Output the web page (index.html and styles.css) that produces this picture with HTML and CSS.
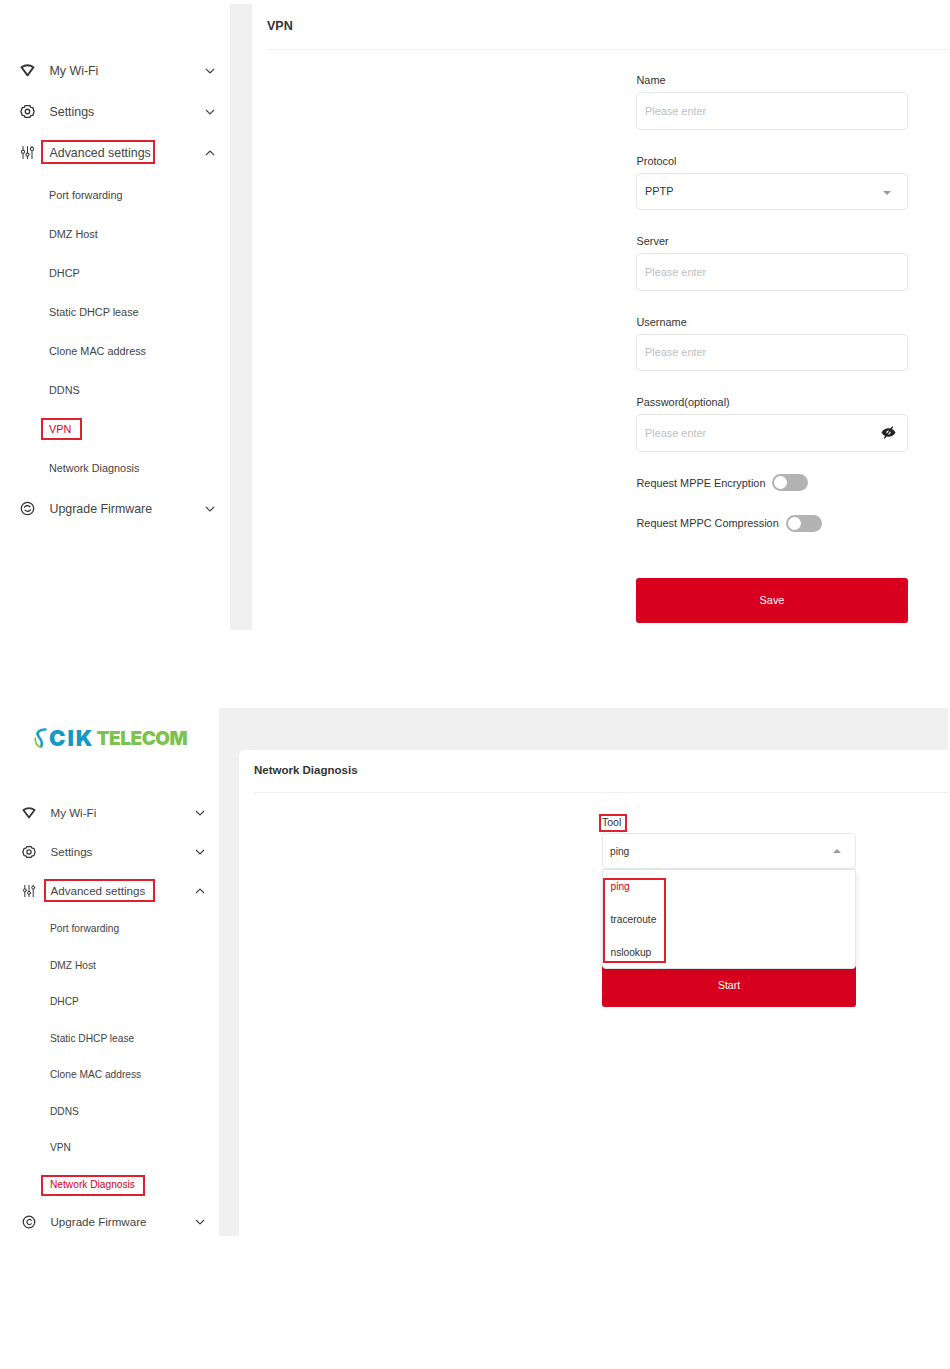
FILE: index.html
```html
<!DOCTYPE html>
<html>

<head>
  <meta http-equiv="Content-Type" content="text/html;charset=utf-8" />
  <title>Router manual</title>
  <link rel="stylesheet" href="styles.css">
</head>

<body>

  <!-- VPN page -->
  <div class="panel panelVpn">
    <div class="sidebar">
      <ul class="menu">
        <li class="menuItem">
          <svg class="menuIcon wifiIcon" viewBox="0 0 16 16"><path d="M1.6 4.6C5.4 2 10.6 2 14.4 4.6L8 13.2Z" /></svg>
          <span>My Wi-Fi</span>
          <svg class="chevron" viewBox="0 0 10 6"><path d="M1 1L5 5L9 1" /></svg>
        </li>
        <li class="menuItem">
          <svg class="menuIcon" viewBox="0 0 16 16"><path d="M5.5 1.8H10.5L11.5 3.6L13.6 3.8L15 8L13.6 12.2L11.5 12.4L10.5 14.2H5.5L4.5 12.4L2.4 12.2L1 8L2.4 3.8L4.5 3.6Z" /><circle cx="8" cy="8" r="2.4" /></svg>
          <span>Settings</span>
          <svg class="chevron" viewBox="0 0 10 6"><path d="M1 1L5 5L9 1" /></svg>
        </li>
        <li class="menuItem menuOpen">
          <svg class="menuIcon slidersIcon" viewBox="0 0 16 16"><path d="M3.2 1.5V5.5M3.2 9V14.5M8 1.5V8.5M8 12V14.5M12.8 1.5V2.5M12.8 6V14.5" /><circle cx="3.2" cy="7.2" r="1.7" /><circle cx="8" cy="10.2" r="1.7" /><circle cx="12.8" cy="4.2" r="1.7" /></svg>
          <span class="mark">Advanced settings</span>
          <svg class="chevron" viewBox="0 0 10 6"><path d="M1 5L5 1L9 5" /></svg>
        </li>
        <li class="subItem"><span>Port forwarding</span></li>
        <li class="subItem"><span>DMZ Host</span></li>
        <li class="subItem"><span>DHCP</span></li>
        <li class="subItem"><span>Static DHCP lease</span></li>
        <li class="subItem"><span>Clone MAC address</span></li>
        <li class="subItem"><span>DDNS</span></li>
        <li class="subItem active"><span class="mark">VPN</span></li>
        <li class="subItem"><span>Network Diagnosis</span></li>
        <li class="menuItem menuLast">
          <svg class="menuIcon" viewBox="0 0 16 16"><circle cx="8" cy="8" r="6.6" /><path d="M4.8 6.6C5.6 4.8 9 4.4 10.6 6.2M11.2 9.4C10.4 11.2 7 11.6 5.4 9.8" /></svg>
          <span>Upgrade Firmware</span>
          <svg class="chevron" viewBox="0 0 10 6"><path d="M1 1L5 5L9 1" /></svg>
        </li>
      </ul>
    </div>

    <div class="content">
      <div class="contentTitle">VPN</div>
      <div class="formWrap">
        <div class="field">
          <label>Name</label>
          <div class="input placeholder">Please enter</div>
        </div>
        <div class="field">
          <label>Protocol</label>
          <div class="input">PPTP <span class="caretDown"></span></div>
        </div>
        <div class="field">
          <label>Server</label>
          <div class="input placeholder">Please enter</div>
        </div>
        <div class="field">
          <label>Username</label>
          <div class="input placeholder">Please enter</div>
        </div>
        <div class="field fieldLast">
          <label>Password(optional)</label>
          <div class="input placeholder">Please enter
            <svg class="eye" viewBox="0 0 16 16"><path d="M.5 8C2.5 4.8 5 3.4 8 3.4S13.5 4.8 15.5 8C13.5 11.2 11 12.6 8 12.6S2.5 11.2 .5 8Z" /><circle class="eyeHole" cx="8" cy="8" r="2.2" /><path class="eyeSlash" d="M12.5 1.8L3.5 14.2" /></svg>
          </div>
        </div>
        <div class="switchRow">Request MPPE Encryption <span class="switch"></span></div>
        <div class="switchRow">Request MPPC Compression <span class="switch"></span></div>
        <div class="button">Save</div>
      </div>
    </div>
  </div>

  <!-- Network diagnosis page -->
  <div class="panel panelDiag">
    <div class="sidebar">
      <div class="logo">
        <svg class="logoMark" viewBox="0 0 14 20"><path class="swooshBlue" d="M11.5 1.5C5 1 1.5 5 5 9C7.5 12 9 15 7 18.5" /><path class="swooshGreen" d="M1.2 10.5C1.5 15.5 4 18.8 7 19.3" /></svg>
        <span class="logoCik">CIK</span><span class="logoTelecom">TELECOM</span>
      </div>
      <ul class="menu">
        <li class="menuItem">
          <svg class="menuIcon wifiIcon" viewBox="0 0 16 16"><path d="M1.6 4.6C5.4 2 10.6 2 14.4 4.6L8 13.2Z" /></svg>
          <span>My Wi-Fi</span>
          <svg class="chevron" viewBox="0 0 10 6"><path d="M1 1L5 5L9 1" /></svg>
        </li>
        <li class="menuItem">
          <svg class="menuIcon" viewBox="0 0 16 16"><path d="M5.5 1.8H10.5L11.5 3.6L13.6 3.8L15 8L13.6 12.2L11.5 12.4L10.5 14.2H5.5L4.5 12.4L2.4 12.2L1 8L2.4 3.8L4.5 3.6Z" /><circle cx="8" cy="8" r="2.4" /></svg>
          <span>Settings</span>
          <svg class="chevron" viewBox="0 0 10 6"><path d="M1 1L5 5L9 1" /></svg>
        </li>
        <li class="menuItem">
          <svg class="menuIcon slidersIcon" viewBox="0 0 16 16"><path d="M3.2 1.5V5.5M3.2 9V14.5M8 1.5V8.5M8 12V14.5M12.8 1.5V2.5M12.8 6V14.5" /><circle cx="3.2" cy="7.2" r="1.7" /><circle cx="8" cy="10.2" r="1.7" /><circle cx="12.8" cy="4.2" r="1.7" /></svg>
          <span class="mark">Advanced settings</span>
          <svg class="chevron" viewBox="0 0 10 6"><path d="M1 5L5 1L9 5" /></svg>
        </li>
        <li class="subItem"><span>Port forwarding</span></li>
        <li class="subItem"><span>DMZ Host</span></li>
        <li class="subItem"><span>DHCP</span></li>
        <li class="subItem"><span>Static DHCP lease</span></li>
        <li class="subItem"><span>Clone MAC address</span></li>
        <li class="subItem"><span>DDNS</span></li>
        <li class="subItem"><span>VPN</span></li>
        <li class="subItem active"><span class="mark">Network Diagnosis</span></li>
        <li class="menuItem">
          <svg class="menuIcon" viewBox="0 0 16 16"><circle cx="8" cy="8" r="6.6" /><path d="M10.6 6C9.4 4.4 6 4.6 5.6 8C6 11.4 9.4 11.6 10.6 10" /></svg>
          <span>Upgrade Firmware</span>
          <svg class="chevron" viewBox="0 0 10 6"><path d="M1 1L5 5L9 1" /></svg>
        </li>
      </ul>
    </div>

    <div class="contentArea">
      <div class="content">
        <div class="contentTitle">Network Diagnosis</div>
        <div class="formWrap">
          <div class="field">
            <label><span class="mark">Tool</span></label>
            <div class="input">ping <span class="caretUp"></span></div>
            <ul class="dropdown">
              <li class="active">ping</li>
              <li>traceroute</li>
              <li>nslookup</li>
              <li class="dropdownMark"></li>
            </ul>
          </div>
          <div class="button">Start</div>
        </div>
      </div>
    </div>
  </div>

</body>

</html>
```

FILE: styles.css
```css
body {
  font-family: "Liberation Sans", Arial, sans-serif;
  color: #333;
  background-color: white;
  margin: 0 2px 0 0;
  padding-top: 4px;
}

ul,
li {
  margin: 0;
  padding: 0;
  list-style: none;
}

.panel {
  display: flex;
}

.panelVpn {
  height: 626px;
}

.panelDiag {
  height: 528px;
  margin-top: 78px;
}

.sidebar {
  flex: none;
  background: white;
}

/* menu */

.menuItem,
.subItem {
  display: flex;
  align-items: center;
  color: #444;
}

.menuIcon {
  flex: none;
  fill: none;
  stroke: #333;
  stroke-width: 1.4;
  stroke-linejoin: round;
  stroke-linecap: round;
}

.wifiIcon {
  stroke-width: 2;
}

.slidersIcon {
  stroke-width: 1.1;
}

.chevron {
  flex: none;
  width: 10px;
  height: 6px;
  margin-left: auto;
  fill: none;
  stroke: #444;
  stroke-width: 1.2;
}

.subItem.active {
  color: #d9001b;
}

/* red boxes of the manual */

.mark {
  position: relative;
}

.mark::after {
  content: "";
  position: absolute;
  border: 2px solid #e0202c;
}

/* content */

.contentTitle {
  font-weight: bold;
  color: #333;
  border-bottom: 1px solid #f0f0f0;
}

label {
  display: block;
  color: #333;
}

.input {
  position: relative;
  display: flex;
  align-items: center;
  box-sizing: border-box;
  background: white;
  border: 1px solid #e8e8e8;
  border-radius: 4px;
  color: #333;
}

.placeholder {
  color: #c0c0c0;
}

.caretDown,
.caretUp {
  position: absolute;
  width: 0;
  height: 0;
  border-left: 4.5px solid transparent;
  border-right: 4.5px solid transparent;
}

.caretDown {
  border-top: 4.5px solid #999;
}

.caretUp {
  border-bottom: 4.5px solid #999;
}

.button {
  background: #d7001e;
  color: white;
  border-radius: 3px;
  text-align: center;
}

/* first page */

.panelVpn .sidebar {
  width: 230px;
  padding-top: 46px;
  box-sizing: border-box;
}

.panelVpn .menu {
  padding: 0 15px 0 20px;
}

.panelVpn .menuItem {
  height: 41px;
  font-size: 12.4px;
}

.panelVpn .menuOpen {
  margin-bottom: 2px;
}

.panelVpn .menuLast {
  margin-top: 1px;
}

.panelVpn .menuIcon {
  width: 15px;
  height: 15px;
  margin-right: 14.5px;
}

.panelVpn .subItem {
  height: 39px;
  padding-left: 29px;
  font-size: 10.85px;
}

.panelVpn .menuItem .mark::after {
  top: -6px;
  bottom: -4px;
  left: -9px;
  right: -4px;
}

.panelVpn .subItem .mark::after {
  top: -5px;
  bottom: -5px;
  left: -8px;
  right: -11px;
}

.panelVpn .content {
  flex: 1;
  background: white;
  border-left: 22px solid #f0f0f0;
}

.panelVpn .contentTitle {
  margin-left: 14px;
  height: 45px;
  padding-left: 1px;
  line-height: 44px;
  font-size: 12.5px;
}

.panelVpn .formWrap {
  width: 272px;
  margin-left: 384px;
  padding-top: 24.4px;
}

.panelVpn .field {
  margin-bottom: 25px;
}

.panelVpn .fieldLast {
  margin-bottom: 22px;
}

.panelVpn label {
  padding-left: 0.5px;
  font-size: 10.9px;
  line-height: 13px;
  margin-bottom: 5px;
}

.panelVpn .input {
  height: 37.5px;
  padding: 0 0 1px 8px;
  font-size: 10.9px;
}

.panelVpn .caretDown {
  right: 16px;
  top: 17px;
}

.eye {
  position: absolute;
  right: 11px;
  top: 10px;
  width: 15px;
  height: 15px;
  fill: #222;
  stroke: none;
}

.eyeHole {
  fill: white;
}

.eyeSlash {
  stroke: #222;
  stroke-width: 1.5;
}

.switchRow {
  display: flex;
  align-items: center;
  gap: 7px;
  height: 18px;
  padding-left: 0.5px;
  margin-bottom: 22.5px;
  font-size: 10.9px;
}

.switch {
  position: relative;
  display: inline-block;
  width: 36px;
  height: 17px;
  background: #b3b3b3;
  border-radius: 9px;
}

.switch::after {
  content: "";
  position: absolute;
  left: 2px;
  top: 2px;
  width: 13px;
  height: 13px;
  border-radius: 50%;
  background: white;
}

.panelVpn .button {
  height: 45px;
  line-height: 45px;
  margin-top: 46px;
  font-size: 10.9px;
}

/* second page */

.panelDiag .sidebar {
  width: 219px;
  box-sizing: border-box;
}

.logo {
  display: flex;
  align-items: center;
  height: 60px;
  margin-bottom: 25px;
  padding-left: 34px;
  font-family: "Inter", sans-serif;
  font-weight: 900;
  font-size: 22px;
}

.logoMark {
  width: 14px;
  height: 20px;
  margin-right: 1px;
  fill: none;
  stroke-linecap: round;
}

.swooshBlue {
  stroke: #1aa0c8;
  stroke-width: 2.6;
}

.swooshGreen {
  stroke: #8cc63f;
  stroke-width: 1.8;
}

.logoCik {
  letter-spacing: 2px;
  color: #1499c4;
}

.logoTelecom {
  margin-left: 2px;
  font-size: 19px;
  letter-spacing: -0.5px;
  color: #7cc24e;
}

.panelDiag .menu {
  padding: 0 14px 0 22px;
}

.panelDiag .menuItem {
  height: 39px;
  font-size: 11.6px;
}

.panelDiag .menuIcon {
  width: 14px;
  height: 14px;
  margin-right: 14.5px;
}

.panelDiag .subItem {
  height: 36.5px;
  padding-left: 28px;
  font-size: 10.2px;
  padding-top: 1px;
  box-sizing: border-box;
}

.panelDiag .menuItem .mark::after {
  top: -5px;
  bottom: -5px;
  left: -7px;
  right: -10px;
}

.panelDiag .subItem .mark::after {
  top: -4px;
  bottom: -6px;
  left: -9px;
  right: -10px;
}

.contentArea {
  flex: 1;
  background: #f0f0f0;
  padding: 42px 0 0 20px;
  display: flex;
}

.panelDiag .content {
  flex: 1;
  background: white;
  border-radius: 6px 0 0 0;
  padding-left: 15px;
}

.panelDiag .contentTitle {
  height: 42px;
  line-height: 41px;
  font-size: 11.5px;
}

.panelDiag .formWrap {
  width: 254px;
  margin-left: 348px;
  padding-top: 23px;
}

.panelDiag .field {
  position: relative;
}

.panelDiag label {
  font-size: 10.5px;
  line-height: 12px;
  margin-bottom: 5px;
}

.panelDiag label .mark::after {
  top: -2px;
  bottom: -4px;
  left: -3px;
  right: -6px;
}

.panelDiag .input {
  height: 36px;
  padding-left: 7px;
  font-size: 10.2px;
}

.panelDiag .caretUp {
  right: 14px;
  top: 15px;
}

.dropdown {
  position: absolute;
  left: 0;
  right: 0;
  top: 53px;
  height: 100px;
  box-sizing: border-box;
  background: white;
  border: 1px solid #e4e4e4;
  border-radius: 0 0 4px 4px;
  box-shadow: 0 2px 6px rgba(0, 0, 0, 0.1);
  padding-left: 7.5px;
  font-size: 10.2px;
}

.dropdown li {
  height: 33px;
  line-height: 33px;
}

.dropdown .active {
  color: #d9001b;
}

.dropdown .dropdownMark {
  position: absolute;
  left: 0;
  top: 8px;
  width: 63px;
  height: 85px;
  box-sizing: border-box;
  border: 2px solid #e0202c;
}

.panelDiag .button {
  height: 43px;
  line-height: 43px;
  margin-top: 95px;
  font-size: 10.5px;
}
```
